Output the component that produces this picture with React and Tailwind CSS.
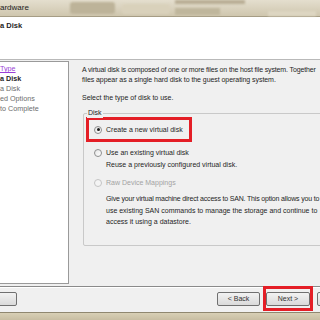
import React from "react";

const Radio = ({ checked, disabled }) => (
    <span
        className={`flex h-[8px] w-[8px] shrink-0 items-center justify-center rounded-full border ${
            disabled ? "border-[#c4c4c4] bg-[#f4f4f4]" : "border-[#8e8f8f] bg-gradient-to-br from-[#e6e6e6] to-white"
        }`}
    >
        {checked && <span className="h-[3px] w-[3px] rounded-full bg-[#1c1c1c]"></span>}
    </span>
);

const Button = ({ children, className = "" }) => (
    <div
        className={`flex h-[14px] shrink-0 items-center justify-center whitespace-nowrap rounded-[2px] border border-[#707070] bg-gradient-to-b from-[#f2f2f2] to-[#dadada] text-[7px] text-[#333] ${className}`}
    >
        {children}
    </div>
);

export default function App() {
    return (
        <div className="flex h-[320px] w-[320px] flex-col overflow-hidden bg-[#f0f0f0] font-['Liberation_Sans',Tahoma,sans-serif] text-[#1e1e1e]">
            {/* title bar */}
            <div className="relative flex h-[17px] shrink-0 items-center border-b border-[#a69d85] bg-gradient-to-b from-[#e4dece] to-[#cfc6ae]">
                <span className="text-[8px] text-[#222]">ardware</span>
                <div className="absolute left-[70px] top-[2px] h-[12px] w-[45px] rounded-[3px] bg-[#bdb399] blur-[1px]"></div>
                <div className="absolute left-[122px] top-[4px] h-[10px] w-[48px] rounded-[3px] bg-[#d9d1bb] blur-[1px]"></div>
                <div className="absolute left-[175px] top-0 h-[4px] w-[70px] bg-[#b8ae94] blur-[1px]"></div>
                <div className="absolute left-[175px] top-[8px] h-[7px] w-[45px] bg-[#bfb69c] blur-[1px]"></div>
                <div className="absolute left-[268px] top-[11px] h-[5px] w-[48px] bg-[#ddd6c2] blur-[1px]"></div>
            </div>

            {/* header */}
            <div className="h-[43px] shrink-0 border-b border-[#b9b9b9] bg-white pt-[4px]">
                <div className="text-[7.5px] font-bold leading-[10px]">a Disk</div>
            </div>

            {/* body */}
            <div className="flex h-[226px] shrink-0 pt-[1px]">
                <div className="h-[223px] w-[69px] shrink-0 border-y border-r border-[#9a9a9a] bg-white pt-[2px] text-[7.2px] leading-[10px]">
                    <div className="text-[#9b3fd6] underline">Type</div>
                    <div className="font-bold">a Disk</div>
                    <div className="text-[#6d6d6d]">a Disk</div>
                    <div className="text-[#6d6d6d]">ed Options</div>
                    <div className="text-[#6d6d6d]">to Complete</div>
                </div>

                <div className="ml-[13px] w-[300px] shrink-0 pt-[4px] text-[7px] leading-[10px]">
                    <div className="whitespace-nowrap tracking-[-0.14px]">A virtual disk is composed of one or more files on the host file system. Together</div>
                    <div className="whitespace-nowrap tracking-[-0.06px]">files appear as a single hard disk to the guest operating system.</div>
                    <div className="mt-[8px]">Select the type of disk to use.</div>

                    <div className="relative ml-[1px] mt-[10px] h-[133px] rounded-[2px] border border-[#c9c9c9] pt-[3px]">
                        <span className="absolute -top-[6px] left-[3px] bg-[#f0f0f0] px-[1px] leading-[10px]">Disk</span>
                        <div className="ml-[2px] flex h-[25px] w-[106px] items-center gap-[4px] border-[3px] border-[#e41e26] pl-[5px]">
                            <Radio checked />
                            <span>Create a new virtual disk</span>
                        </div>

                        <div className="ml-[10px] mt-[6px] flex items-center gap-[4px]">
                            <Radio />
                            <span>Use an existing virtual disk</span>
                        </div>
                        <div className="ml-[22px] mt-[2px]">Reuse a previously configured virtual disk.</div>

                        <div className="ml-[10px] mt-[8px] flex items-center gap-[4px] text-[#a3a3a3]">
                            <Radio disabled />
                            <span>Raw Device Mappings</span>
                        </div>
                        <div className="ml-[22px] mt-[5px] whitespace-nowrap leading-[11.5px]">
                            <div className="tracking-[-0.18px]">Give your virtual machine direct access to SAN. This option allows you to</div>
                            <div>use existing SAN commands to manage the storage and continue to</div>
                            <div>access it using a datastore.</div>
                        </div>
                    </div>
                </div>
            </div>

            {/* footer */}
            <div className="h-[26px] shrink-0 border-t border-[#8a8a8a]">
                <div className="flex h-full items-start border-t border-white pt-[4px]">
                    <Button className="-ml-[2px] w-[19px]"></Button>
                    <Button className="ml-[200px] w-[43px]">&lt; Back</Button>
                    <div className="relative ml-[6px] shrink-0">
                        <Button className="w-[44px]">Next &gt;</Button>
                        <div className="absolute -bottom-[5px] -left-[3px] -right-[3px] -top-[6px] border-[3px] border-[#e41e26]"></div>
                    </div>
                    <Button className="ml-[7px] w-[40px]"></Button>
                </div>
            </div>

            {/* window frame bottom */}
            <div className="flex-1 border-t border-[#8f876f] bg-gradient-to-b from-[#d8cfb5] to-[#c8bea2]"></div>
        </div>
    );
}
